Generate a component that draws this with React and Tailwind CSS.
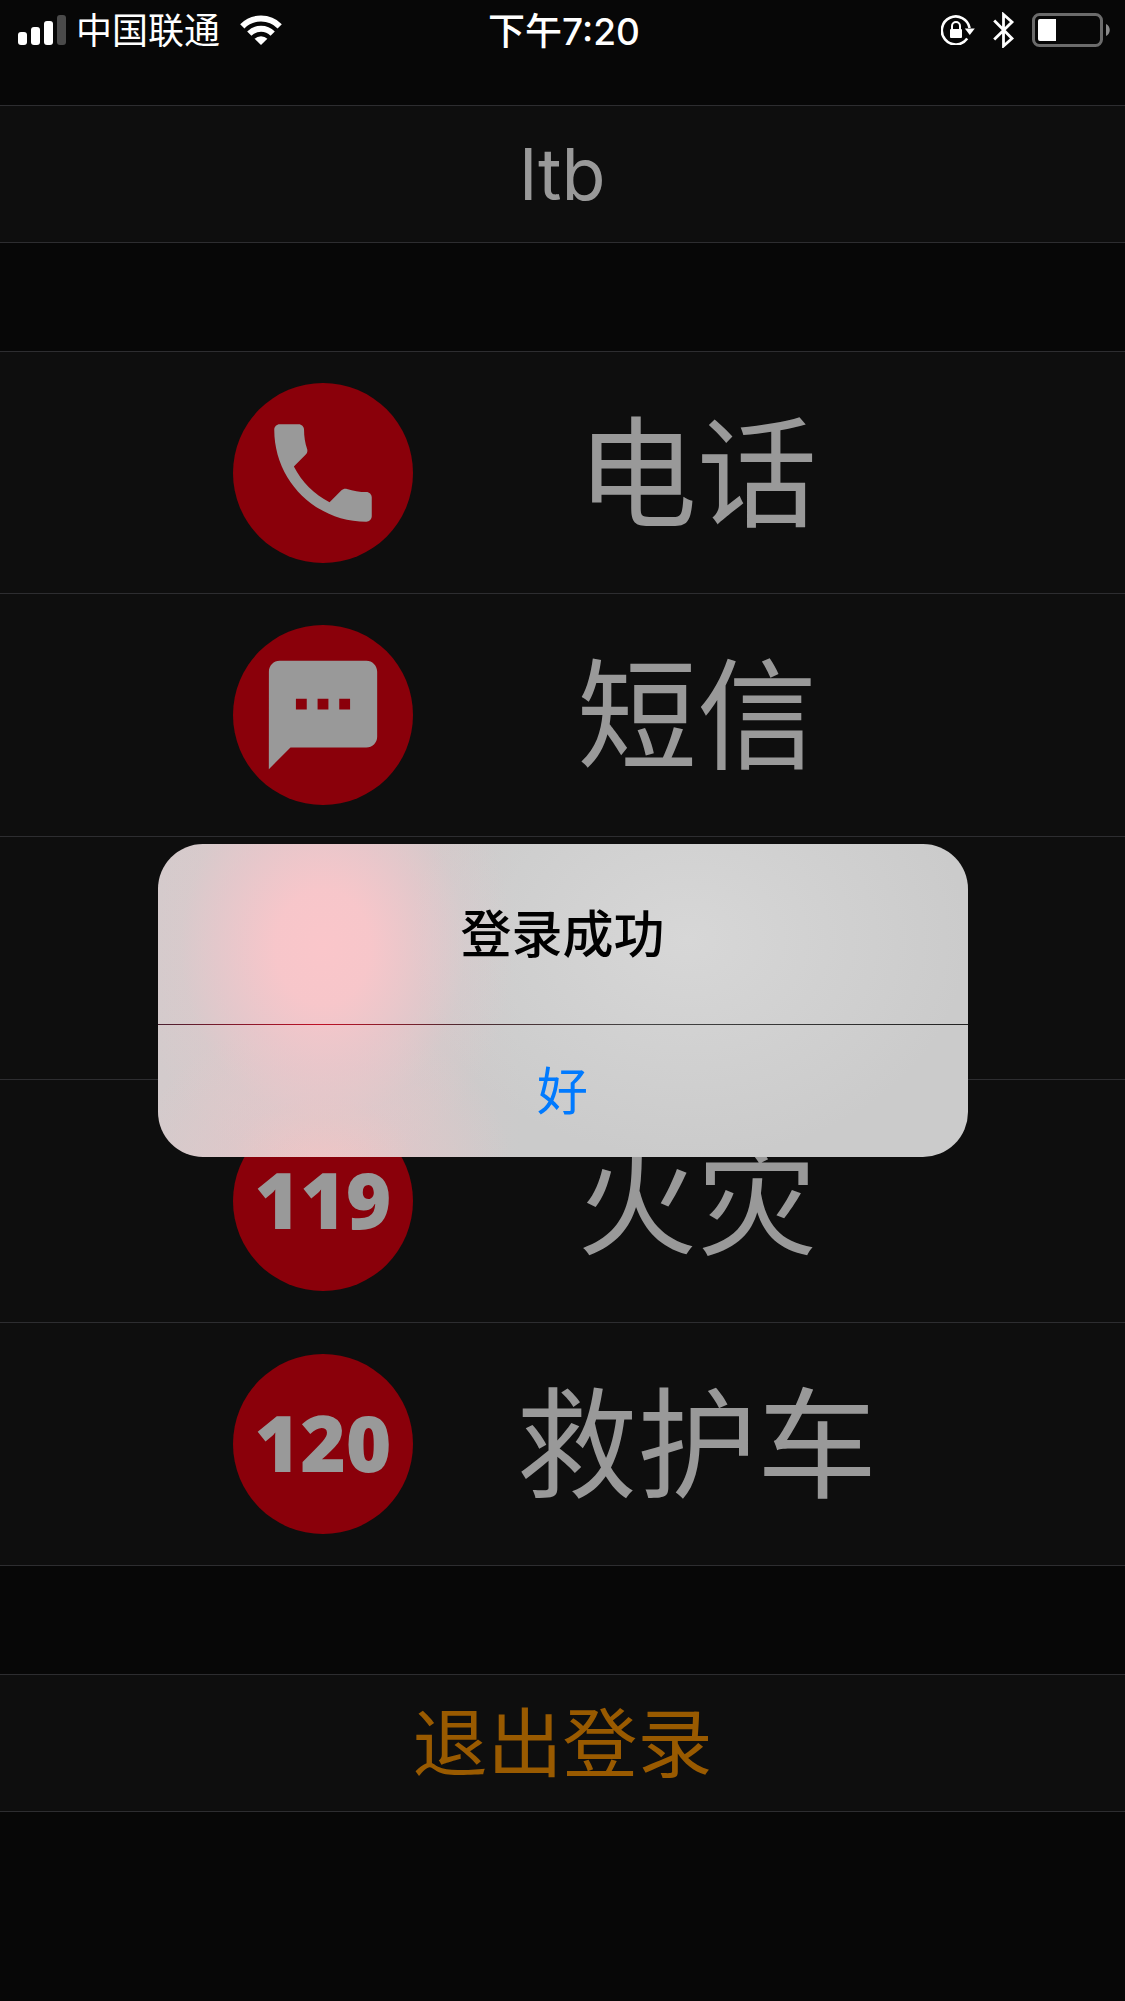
const PHONE =
  'M6.62 10.79c1.44 2.83 3.76 5.14 6.59 6.59l2.2-2.2c.27-.27.67-.36 1.02-.24 1.12.37 2.33.57 3.57.57.55 0 1 .45 1 1V20c0 .55-.45 1-1 1-9.39 0-17-7.61-17-17 0-.55.45-1 1-1h3.5c.55 0 1 .45 1 1 0 1.25.2 2.45.57 3.57.11.35.03.74-.25 1.02l-2.2 2.2z';
const MESSAGE =
  'M20 2H4c-1.1 0-1.99.9-1.99 2L2 22l4-4h14c1.1 0 2-.9 2-2V4c0-1.1-.9-2-2-2zM9 11H7V9h2v2zm4 0h-2V9h2v2zm4 0h-2V9h2v2z';

const rows = [
  { id: 'phone', path: PHONE, label: '电话' },
  { id: 'sms', path: MESSAGE, label: '短信' },
  { id: 'covered' },
  { id: 'fire', number: '119', label: '火灾' },
  { id: 'ambulance', number: '120', label: '救护车' },
];

function Signal() {
  return (
    <svg className="h-[30px] w-12" viewBox="0 0 48 30" aria-hidden="true">
      <rect x="0" y="17" width="9" height="13" rx="3" fill="#fff" />
      <rect x="13" y="12" width="9" height="18" rx="3" fill="#fff" />
      <rect x="26" y="6" width="9" height="24" rx="3" fill="#fff" />
      <rect x="39" y="0" width="9" height="30" rx="3" fill="#4a4a4a" />
    </svg>
  );
}

function Wifi() {
  return (
    <svg className="h-[30px] w-[42px]" viewBox="0 0 42 30" aria-hidden="true">
      <g fill="none" stroke="#fff" strokeWidth="6">
        <path d="M2.3 11.3a26.5 26.5 0 0 1 37.4 0" />
        <path d="M9.3 18.6a16.5 16.5 0 0 1 23.4 0" />
      </g>
      <path d="M21 30l-6.4-6.2a9 9 0 0 1 12.8 0z" fill="#fff" />
    </svg>
  );
}

function RotationLock() {
  return (
    <svg className="h-[30px] w-[34px]" viewBox="0 0 34 30" aria-hidden="true">
      <path d="M26.2 23.6A14 14 0 1 1 28.6 13" fill="none" stroke="#fff" strokeWidth="2.6" />
      <path d="M23.8 13.500h10l-5 6.4z" fill="#fff" />
      <rect x="9" y="14" width="12" height="9" rx="1" fill="#fff" />
      <path d="M11 14.5v-3.500a4 4 0 0 1 8 0v3.500" fill="none" stroke="#fff" strokeWidth="2" />
    </svg>
  );
}

function Bluetooth() {
  return (
    <svg className="h-9 w-[22px]" viewBox="0 0 22 36" aria-hidden="true">
      <path
        d="M1.200 8.500L19 26.500L10.500 34V2.500L19 10L1.200 27.500"
        fill="none"
        stroke="#fff"
        strokeWidth="2.800"
      />
    </svg>
  );
}

function Battery() {
  return (
    <svg className="h-[34px] w-[78px]" viewBox="0 0 78 34" aria-hidden="true">
      <rect x="1.500" y="1.500" width="68" height="31" rx="6" fill="none" stroke="#6b6b6b" strokeWidth="3" />
      <path d="M8 6h16v22H8a2 2 0 0 1-2-2V8a2 2 0 0 1 2-2z" fill="#fff" />
      <path d="M74 11c5 2 5 10 0 12z" fill="#8a8a8a" />
    </svg>
  );
}

function Badge({ path, number }) {
  return (
    <span className="flex size-[180px] shrink-0 items-center justify-center rounded-full bg-[#8a000a]">
      {path ? (
        <svg className="size-[130px]" viewBox="0 0 24 24" fill="#999999" aria-hidden="true">
          <path d={path} />
        </svg>
      ) : (
        <span className="pb-[5px] font-['Open_Sans',sans-serif] text-[78px] leading-none font-extrabold">{number}</span>
      )}
    </span>
  );
}

export default function App() {
  return (
    <div className="min-h-screen bg-[#070707] font-['Inter','Noto_Sans_CJK_SC',sans-serif] text-[#999999]">
      <header className="flex h-[105px] items-start px-[15px] text-white">
        <div className="flex h-[60px] flex-1 items-center pl-[3px]">
          <Signal />
          <span className="ml-[10px] pt-[2px] text-[36px] leading-none">中国联通</span>
          <span className="ml-5">
            <Wifi />
          </span>
        </div>
        <time className="flex h-[60px] items-center pt-[2px] text-[37px] leading-none font-medium">下午7:20</time>
        <div className="flex h-[60px] flex-1 items-center justify-end">
          <RotationLock />
          <span className="mr-[17px] ml-[18px]">
            <Bluetooth />
          </span>
          <Battery />
        </div>
      </header>

      <main>
        <h1 className="flex h-[138px] items-center justify-center border-y border-[#2d2d30] bg-[#0e0e0e] text-[72px] leading-none font-normal">
          ltb
        </h1>

        <ul className="mt-[108px]">
          {rows.map((row) => (
            <li key={row.id} className="h-[243px] border-b border-[#2d2d30] bg-[#0e0e0e] first:border-t">
              {row.label && (
                <button type="button" className="flex size-full items-center pr-[188px] pl-[233px]">
                  <Badge path={row.path} number={row.number} />
                  <span className="ml-11 flex-1 pt-1 text-center text-[120px] leading-none">{row.label}</span>
                </button>
              )}
            </li>
          ))}
        </ul>

        <button
          type="button"
          className="mt-[108px] flex h-[138px] w-full items-center justify-center border-y border-[#2d2d30] bg-[#0e0e0e] text-[75px] leading-none text-[#995a00]"
        >
          退出登录
        </button>
      </main>

      <div className="fixed inset-0 flex items-center justify-center">
        <div
          role="alertdialog"
          aria-labelledby="alert-title"
          className="w-[72%] overflow-hidden rounded-[45px] bg-[#cbcbcb] bg-[radial-gradient(ellipse_190px_230px_at_165px_103px,#fac6ca_0%,#f9c6caf0_25%,#f2c6cba0_50%,#e4c9cc40_75%,#cbcbcb00_100%),radial-gradient(ellipse_190px_160px_at_165px_330px,#f2c4c4_0%,#e6c6c880_50%,#cbcbcb00_100%),radial-gradient(ellipse_280px_220px_at_530px_95px,#d7d7d7_0%,#cbcbcb00_100%),linear-gradient(90deg,#d3cbcc_0%,#d6c8ca_20%,#cbcbcb_45%)]"
        >
          <h2
            id="alert-title"
            className="flex h-[180px] items-center justify-center text-[51px] leading-none font-medium text-black"
          >
            登录成功
          </h2>
          <div className="h-px bg-[linear-gradient(90deg,#4a2030_0%,#c01025_20%,#4a2a30_38%,#444444_60%,#222222_100%)]" />
          <button
            type="button"
            className="flex h-[132px] w-full items-center justify-center text-[51px] leading-none text-[#007aff]"
          >
            好
          </button>
        </div>
      </div>
    </div>
  );
}
